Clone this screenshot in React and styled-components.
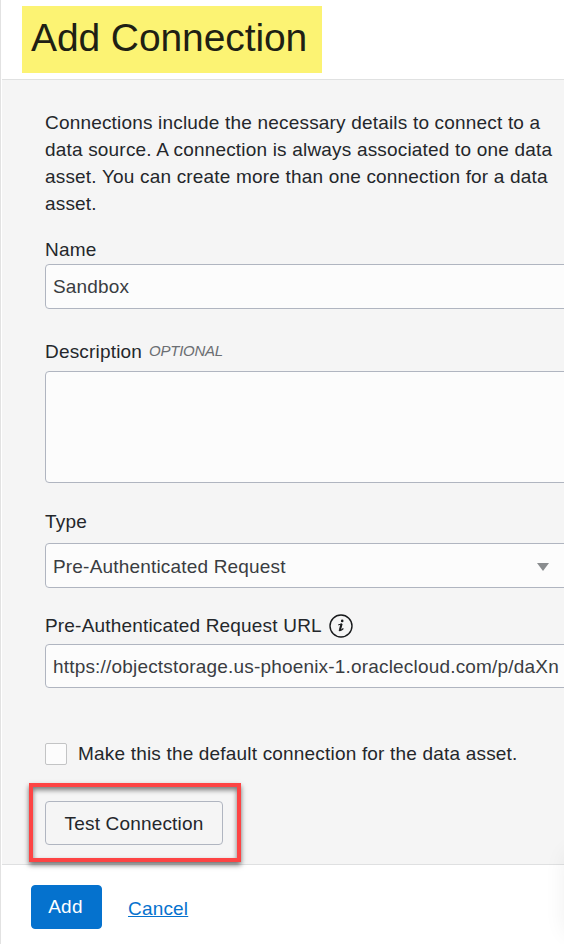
import React from "react";
import styled, { createGlobalStyle } from "styled-components";

const GlobalStyle = createGlobalStyle`
  * { box-sizing: border-box; }
  body {
    margin: 0;
    overflow: hidden;
    background: #fff;
    font-family: "Liberation Sans", Arial, sans-serif;
    font-size: 19px;
    letter-spacing: 0.185px;
    color: #24272b;
  }
`;

const Panel = styled.main`
  position: relative;
  display: flex;
  flex-direction: column;
  width: 564px;
  height: 944px;
  overflow: hidden;
  border-left: 1px solid #e2e2e2;
  padding-left: 1px;
`;

const Header = styled.header`
  height: 80px;
  flex: none;
  padding: 6px 0 0 20px;
  border-bottom: 1px solid #e0e1e1;
`;

const Title = styled.h1`
  margin: 0;
  width: 300px;
  height: 67px;
  padding-left: 9px;
  background: #fcf373;
  color: #201f14;
  font-size: 39px;
  font-weight: 400;
  line-height: 63px;
  letter-spacing: -0.1px;
  white-space: nowrap;
`;

const Body = styled.section`
  height: 785px;
  flex: none;
  padding: 29px 0 0 43px;
  background: #f5f5f5;
  border-bottom: 1px solid #dfe0e1;
`;

const Intro = styled.p`
  margin: 0;
  line-height: 27px;
  white-space: nowrap;
`;

const Field = styled.div`
  display: flex;
  flex-direction: column;
  margin-top: ${(p) => p.$top}px;
`;

const Label = styled.label`
  display: flex;
  align-items: center;
  height: 28px;
  white-space: nowrap;
  margin-bottom: ${(p) => p.$gap || 0}px;
`;

const Optional = styled.em`
  margin: -3px 0 0 7px;
  color: #6b6e72;
  font-size: 15px;
  letter-spacing: -0.25px;
`;

const Control = styled.div`
  display: flex;
  align-items: center;
  width: 540px;
  height: ${(p) => p.$height}px;
  padding: ${(p) => p.$drop || 0}px 0 0 7px;
  border: 1px solid #b0b5c0;
  border-radius: 4px;
  background: #fcfcfc;
  color: #3a3d42;
  white-space: nowrap;
`;

const Arrow = styled.svg`
  margin-left: auto;
  margin-right: 35px;
`;

const Info = styled.svg`
  margin-left: 7px;
`;

const CheckRow = styled.label`
  display: flex;
  align-items: center;
  gap: 11px;
  height: 22px;
  margin-top: 55px;
  white-space: nowrap;
`;

const Box = styled.span`
  width: 22px;
  height: 22px;
  border: 1px solid #c3c4c5;
  border-radius: 2px;
  background: #fcfcfc;
`;

const Highlight = styled.div`
  width: 212px;
  height: 79px;
  margin: 18px 0 0 -16px;
  padding: 14px 12px;
  border: 4px solid #fd4444;
  box-shadow: 0 3px 5px rgba(0, 0, 0, 0.55), inset 0 3px 5px rgba(0, 0, 0, 0.5);
`;

const Button = styled.button`
  display: block;
  width: ${(p) => (p.$primary ? 71 : 178)}px;
  height: 44px;
  padding: ${(p) => (p.$primary ? "0 2px 0 0" : "2px 0 0")};
  font: inherit;
  letter-spacing: ${(p) => (p.$primary ? 0.3 : 0.17)}px;
  border: 1px solid ${(p) => (p.$primary ? "#0572ce" : "#b0b5c0")};
  border-radius: 4px;
  background: ${(p) => (p.$primary ? "#0572ce" : "#f5f5f5")};
  color: ${(p) => (p.$primary ? "#fff" : "#24272b")};
`;

const Footer = styled.footer`
  display: flex;
  align-items: flex-start;
  gap: 26px;
  padding: 20px 0 0 29px;
`;

const Cancel = styled.a`
  color: #0572ce;
  line-height: 48px;
  text-decoration: underline;
`;

const EdgeShade = styled.div`
  position: absolute;
  right: -34px;
  top: 854px;
  width: 30px;
  height: 78px;
  box-shadow: 0 0 24px rgba(0, 10, 10, 0.09);
`;

export default function App() {
  return (
    <>
      <GlobalStyle />
      <Panel>
        <Header>
          <Title>Add Connection</Title>
        </Header>
        <Body>
          <Intro>
            Connections include the necessary details to connect to a<br />
            data source. A connection is always associated to one data<br />
            asset. You can create more than one connection for a data<br />
            asset.
          </Intro>
          <Field $top={19}>
            <Label>Name</Label>
            <Control $height={45}>Sandbox</Control>
          </Field>
          <Field $top={29}>
            <Label $gap={5}>
              Description <Optional>OPTIONAL</Optional>
            </Label>
            <Control $height={112} />
          </Field>
          <Field $top={25}>
            <Label $gap={7}>Type</Label>
            <Control $height={45} $drop={2}>
              Pre-Authenticated Request
              <Arrow width="12" height="8" viewBox="0 0 12 8">
                <path d="M0 0h12L6 8z" fill="#8a8d8f" />
              </Arrow>
            </Control>
          </Field>
          <Field $top={24}>
            <Label $gap={4}>
              Pre-Authenticated Request URL
              <Info width="24" height="24" viewBox="0 0 24 24" fill="none" stroke="#17191b">
                <circle cx="12" cy="12" r="11" strokeWidth="1.4" />
                <circle cx="13.2" cy="6.9" r="1.3" fill="#17191b" stroke="none" />
                <path d="M9.2 10.9l3.8-1" strokeWidth="1" />
                <path d="M12.6 9.7l-1.7 6.3" strokeWidth="2.1" />
                <path d="M10.2 15.9q.2 2.1 4.2-1.4" strokeWidth="1.1" />
              </Info>
            </Label>
            <Control $height={44} $drop={2}>
              https://objectstorage.us-phoenix-1.oraclecloud.com/p/daXn
            </Control>
          </Field>
          <CheckRow>
            <Box />
            Make this the default connection for the data asset.
          </CheckRow>
          <Highlight>
            <Button>Test Connection</Button>
          </Highlight>
        </Body>
        <Footer>
          <Button $primary>Add</Button>
          <Cancel>Cancel</Cancel>
        </Footer>
        <EdgeShade />
      </Panel>
    </>
  );
}
